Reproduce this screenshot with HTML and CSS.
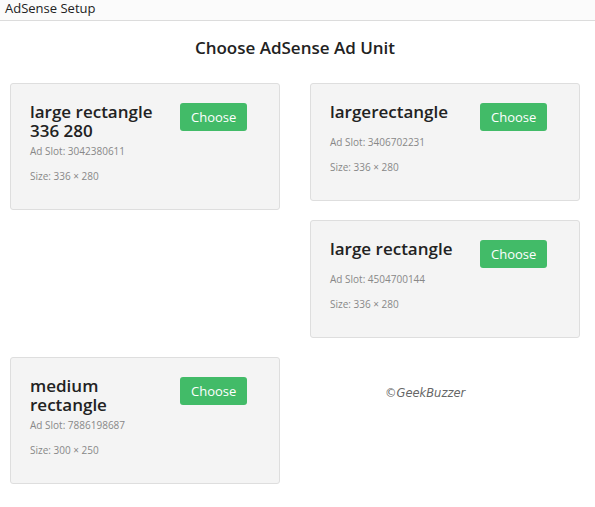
FILE: index.html
```html
<!DOCTYPE html>
<html>
<head>
<meta charset="utf-8">
<title>AdSense Setup</title>
<link rel="stylesheet" href="styles.css">
</head>
<body>
<header class="topbar">AdSense Setup</header>
<main class="main">
  <h1 class="page-title">Choose AdSense Ad Unit</h1>
  <div class="units">
    <section class="card card-a">
      <div class="card-head">
        <h2 class="unit-name">large rectangle 336 280</h2>
        <button class="choose">Choose</button>
      </div>
      <p class="meta">Ad Slot: 3042380611</p>
      <p class="meta meta-size">Size: 336 × 280</p>
    </section>
    <section class="card card-b">
      <div class="card-head">
        <h2 class="unit-name">largerectangle</h2>
        <button class="choose">Choose</button>
      </div>
      <p class="meta">Ad Slot: 3406702231</p>
      <p class="meta meta-size">Size: 336 × 280</p>
    </section>
    <section class="card card-c">
      <div class="card-head">
        <h2 class="unit-name">large rectangle</h2>
        <button class="choose">Choose</button>
      </div>
      <p class="meta">Ad Slot: 4504700144</p>
      <p class="meta meta-size">Size: 336 × 280</p>
    </section>
    <section class="card card-d">
      <div class="card-head">
        <h2 class="unit-name">medium rectangle</h2>
        <button class="choose">Choose</button>
      </div>
      <p class="meta">Ad Slot: 7886198687</p>
      <p class="meta meta-size">Size: 300 × 250</p>
    </section>
    <div class="credit">©GeekBuzzer</div>
  </div>
</main>
</body>
</html>
```

FILE: styles.css
```css
* { box-sizing: border-box; }

body {
  margin: 0;
  background: #ffffff;
  font-family: "Open Sans", "Noto Sans", sans-serif;
  color: #222;
}

.topbar {
  height: 21px;
  padding: 1px 5px 0;
  font-size: 13px;
  line-height: 14px;
  color: #222;
  background: #fbfbfb;
  border-bottom: 1px solid #dcdcdc;
}

.main {
  width: 590px;
  padding: 0 10px;
}

.page-title {
  margin: 15px 0 23px;
  font-size: 17px;
  line-height: 24px;
  font-weight: 600;
  text-align: center;
  color: #222;
}

.units {
  display: grid;
  grid-template-columns: 270px 270px;
  column-gap: 30px;
  row-gap: 19px;
  align-items: start;
}

.card {
  background: #f4f4f4;
  border: 1px solid #dedede;
  border-radius: 3px;
  padding: 18px 19px 25px;
}

.card-a { grid-column: 1; grid-row: 1 / span 2; }
.card-b { grid-column: 2; grid-row: 1; }
.card-c { grid-column: 2; grid-row: 2; }
.card-d { grid-column: 1; grid-row: 3; }

.card-head {
  display: flex;
  align-items: flex-start;
}

.unit-name {
  flex: 0 0 135px;
  margin: 0;
  font-size: 17px;
  line-height: 19px;
  font-weight: 600;
  color: #222;
}

.choose {
  margin: 1px 0 0 15px;
  height: 28px;
  padding: 0 11px;
  border: none;
  border-radius: 3px;
  background: #42bb68;
  color: #fff;
  font-family: "Open Sans", sans-serif;
  font-size: 13px;
  line-height: 28px;
}

.meta {
  margin: 4px 0 0;
  font-size: 10px;
  line-height: 15px;
  color: #888;
}

.meta-size { margin-top: 10px; }

.credit {
  grid-column: 2;
  grid-row: 3;
  padding: 29px 0 0 75px;
  font-family: "DejaVu Sans", sans-serif;
  font-style: italic;
  font-size: 11.5px;
  line-height: 14px;
  color: #666;
}
```
